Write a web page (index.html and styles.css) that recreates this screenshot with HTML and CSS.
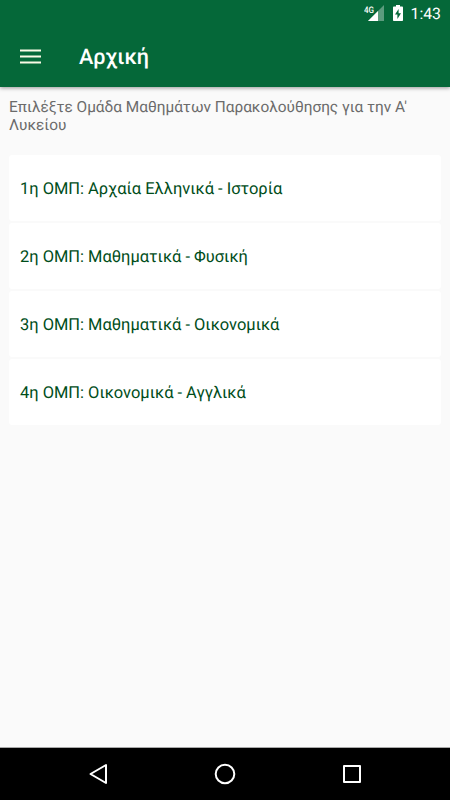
FILE: index.html
```
<!DOCTYPE html>
<html lang="el">
<head>
    <meta charset="UTF-8">
    <meta name="viewport" content="width=device-width, initial-scale=1.0">
    <title>Αρχική</title>
    <link rel="stylesheet" href="styles.css">
</head>
<body>
    <header class="header">
        <div class="status-bar">
            <svg class="signal" width="20" height="18" viewBox="0 0 20 18">
                <path d="M20 2v16H4z" fill="#fff" fill-opacity="0.35"/>
                <path d="M14 8v10H4z" fill="#fff"/>
                <text class="network" x="0" y="9.500" textLength="10" lengthAdjust="spacingAndGlyphs">4G</text>
            </svg>
            <svg class="battery" width="10" height="16" viewBox="0 0 10 16">
                <path d="M3 0h4v1.600h2.200q.8 0 .8.8v12.800q0 .8-.8.8H.8q-.8 0-.8-.8V2.400q0-.8.8-.8H3z" fill="#fff"/>
                <path d="M5.600 4L2 9.600h2.400V14L8 8.200H5.600z" fill="#056839"/>
            </svg>
            <span class="time">1:43</span>
        </div>
        <div class="toolbar">
            <svg class="menu" width="21" height="15" viewBox="0 0 21 15">
                <path d="M0 1.500h21M0 7.500h21M0 13.500h21" stroke="#fafae6" stroke-width="2"/>
            </svg>
            <h1 class="title">Αρχική</h1>
        </div>
    </header>

    <main class="content">
        <p class="prompt">Επιλέξτε Ομάδα Μαθημάτων Παρακολούθησης για την Α' Λυκείου</p>
        <ul class="groups">
            <li class="card">1η ΟΜΠ: Αρχαία Ελληνικά - Ιστορία</li>
            <li class="card">2η ΟΜΠ: Μαθηματικά - Φυσική</li>
            <li class="card">3η ΟΜΠ: Μαθηματικά - Οικονομικά</li>
            <li class="card">4η ΟΜΠ: Οικονομικά - Αγγλικά</li>
        </ul>
    </main>

    <nav class="nav-bar">
        <svg width="22" height="22" viewBox="0 0 22 22">
            <path d="M19 2v18L3.500 11z"/>
        </svg>
        <svg width="22" height="22" viewBox="0 0 22 22">
            <circle cx="11" cy="11" r="9.300"/>
        </svg>
        <svg width="22" height="22" viewBox="0 0 22 22">
            <rect x="3" y="3" width="16" height="16"/>
        </svg>
    </nav>
</body>
</html>
```
FILE: styles.css
```
body {
    margin: 0;
    display: flex;
    flex-direction: column;
    height: 100vh;
    overflow: hidden;
    background-color: #fafafa;
    font-family: Roboto, "Noto Sans", sans-serif;
    text-rendering: geometricPrecision;
}

/* Status bar and toolbar share one green block */
.header {
    flex: none;
    height: 87px;
    background-color: #056839;
    color: #fff;
    box-shadow: 0 1px 4px rgba(0, 0, 0, 0.4);
}

.status-bar {
    display: flex;
    justify-content: flex-end;
    align-items: flex-start;
    height: 27px;
    padding-right: 9px;
}

.signal {
    margin: 3px 9px 0 0;
}

.network {
    font-size: 9px;
    font-weight: 500;
    fill: #fff;
}

.battery {
    margin: 5px 8px 0 0;
}

.time {
    margin-top: 4px;
    font-size: 15.8px;
    line-height: 20px;
}

.toolbar {
    display: flex;
    align-items: center;
    height: 60px;
    padding-left: 20px;
}

.menu {
    margin-bottom: 2px;
}

.title {
    margin: 2px 0 0 38px;
    font-size: 21.6px;
    font-weight: 500;
    line-height: 28px;
}

.content {
    flex: 1;
    padding: 11px 9px 0;
}

.prompt {
    margin: 0;
    font-size: 15.4px;
    line-height: 18px;
    color: #6b6b6b;
}

.groups {
    display: flex;
    flex-direction: column;
    gap: 2px;
    margin: 21px 0 0;
    padding: 0;
    list-style: none;
}

.card {
    height: 66px;
    padding-left: 11px;
    border-radius: 3px;
    background-color: #fff;
    font-size: 16.45px;
    line-height: 70px;
    color: #004d1a;
}

.nav-bar {
    flex: none;
    display: flex;
    justify-content: space-between;
    align-items: center;
    box-sizing: border-box;
    height: 53px;
    padding: 0 87px;
    border-top: 1px solid #a8a8a8;
    background-color: #000;
}

.nav-bar svg {
    fill: none;
    stroke: #fff;
    stroke-width: 2;
    stroke-linejoin: round;
}
```
